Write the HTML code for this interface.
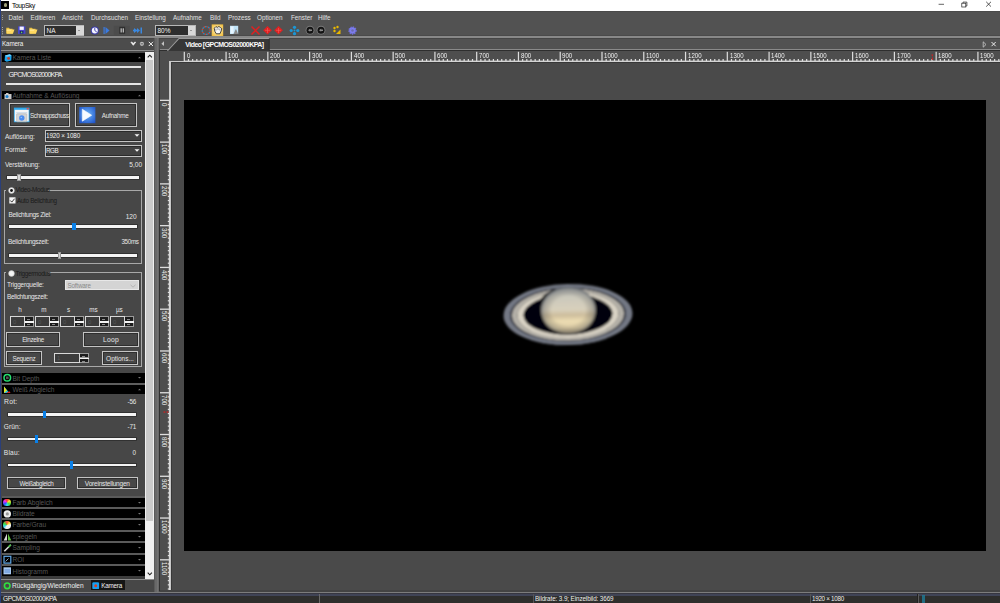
<!DOCTYPE html>
<html><head><meta charset="utf-8"><style>
*{margin:0;padding:0;box-sizing:border-box}
html,body{width:1000px;height:603px;overflow:hidden;background:#4a4a4a;font-family:"Liberation Sans",sans-serif;position:relative}
.a{position:absolute}
.t{position:absolute;white-space:nowrap;font-size:6.3px;line-height:7px;color:#e6e6e6}
.bar{position:absolute;left:2px;width:142.5px;background:#000}
.bt{position:absolute;white-space:nowrap;font-size:6.6px;line-height:7px;color:#565656;left:12.4px;top:1.5px}
.btn{position:absolute;border:1px solid #c4c4c4;background:#474747;box-shadow:inset 0 0 0 1px #2e2e2e}
.cmb{position:absolute;border:1px solid #c4c4c4;background:#434343;box-shadow:inset 0 0 0 1px #2a2a2a}
.trk{position:absolute;height:2.5px;background:#f4f4f4;box-shadow:0 -1px 0 #2a2a2a,0 1px 0 #303030}
.thb{position:absolute;width:3.5px;height:7px;background:#0a80e8}
.thg{position:absolute;width:3.5px;height:7px;background:#d0d0d0}
.grp{position:absolute;border:1px solid #a8a8a8}
.spin{position:absolute;width:23.5px;height:11px}
.spin .f{position:absolute;left:0;top:0;width:15px;height:11px;border:1px solid #d8d8d8;background:#3c3c3c}
.spin .u{position:absolute;left:14.5px;top:0;width:9px;height:5.5px;border:1px solid #9a9a9a;border-left:none;background:#1c1c1c}
.spin .d{position:absolute;left:14.5px;top:5.5px;width:9px;height:5.5px;border:1px solid #9a9a9a;border-left:none;background:#1c1c1c}
.spin .m{position:absolute;left:14.5px;top:4.8px;width:9px;height:1.5px;background:#f4f4f4}
.spin .u:after,.spin .d:after{content:"";position:absolute;left:2.8px;top:1.6px;width:2.6px;height:0.9px;background:#8a8a8a}
</style></head><body>
<div class="a" style="left:0px;top:0px;width:1px;height:603px;background:#2a3f7a"></div>
<div class="a" style="left:1px;top:0px;width:999px;height:10.6px;background:#fff"></div>
<div class="a" style="left:1px;top:1px;width:8px;height:8px;background:#000"></div>
<div class="a" style="left:3.5px;top:3px;width:3.5px;height:3.5px;border-radius:50%;background:#a0a078"></div>
<div class="t" style="left:12px;top:2px;color:#000;font-size:6.6px;letter-spacing:-0.35px">ToupSky</div>
<svg class="a" style="left:930px;top:0" width="70" height="10" viewBox="930 0 70 10">
<path d="M938.6 4.3h5.4" stroke="#222" stroke-width="0.7"/>
<rect x="961.8" y="3.2" width="4" height="3.8" fill="none" stroke="#222" stroke-width="0.7"/>
<path d="M963 3.2v-1.1h3.9v3.9h-1.1" fill="none" stroke="#222" stroke-width="0.7"/>
<path d="M986.2 1.8l4.8 4.8M991 1.8l-4.8 4.8" stroke="#222" stroke-width="0.75"/>
</svg>
<div class="a" style="left:1px;top:10.6px;width:999px;height:24.1px;background:#525252"></div>
<div class="a" style="left:1px;top:10.6px;width:999px;height:1px;background:#4a4a4a"></div>
<div class="a" style="left:1px;top:34.9px;width:999px;height:1.2px;background:#4a4a4a"></div>
<div class="a" style="left:2px;top:15px;width:1.2px;height:1.2px;background:#999;box-shadow:0 2px 0 #999,0 4px 0 #999"></div>
<div class="t" style="left:8.5px;top:13.5px;font-size:6.3px;color:#e0e0e0">Datei</div>
<div class="t" style="left:30.5px;top:13.5px;font-size:6.3px;color:#e0e0e0">Editieren</div>
<div class="t" style="left:62px;top:13.5px;font-size:6.3px;color:#e0e0e0">Ansicht</div>
<div class="t" style="left:91px;top:13.5px;font-size:6.3px;color:#e0e0e0">Durchsuchen</div>
<div class="t" style="left:135px;top:13.5px;font-size:6.3px;color:#e0e0e0">Einstellung</div>
<div class="t" style="left:173px;top:13.5px;font-size:6.3px;color:#e0e0e0">Aufnahme</div>
<div class="t" style="left:210px;top:13.5px;font-size:6.3px;color:#e0e0e0">Bild</div>
<div class="t" style="left:228px;top:13.5px;font-size:6.3px;color:#e0e0e0">Prozess</div>
<div class="t" style="left:257px;top:13.5px;font-size:6.3px;color:#e0e0e0">Optionen</div>
<div class="t" style="left:291px;top:13.5px;font-size:6.3px;color:#e0e0e0">Fenster</div>
<div class="t" style="left:318px;top:13.5px;font-size:6.3px;color:#e0e0e0">Hilfe</div>
<div class="a" style="left:2px;top:26.8px;width:1.3px;height:1.2px;background:#aaa;box-shadow:0 2.1px 0 #aaa,0 4.2px 0 #aaa,0 6.3px 0 #aaa"></div>

<svg class="a" style="left:0;top:23px" width="380" height="14" viewBox="0 23 380 14">
 <!-- folder 1 -->
 <path d="M6.3 27.8h2.6l0.9 0.9h2.8v4.9h-6.3z" fill="#e8c040"/><path d="M6.6 29.6h7.9l-1.6 4.2h-6.3z" fill="#ffd860"/><path d="M6.6 29.6h5l-0.8 1.2h-4.2z" fill="#fff0b0" opacity="0.7"/>
 <!-- save -->
 <rect x="18" y="26.3" width="7.4" height="7.6" fill="#4848c8"/><rect x="19.6" y="26.6" width="4.2" height="3.3" fill="#f4f4ff"/><rect x="19.8" y="31" width="3.6" height="2.6" fill="#20206a"/><circle cx="21.6" cy="32.4" r="0.8" fill="#60d060"/>
 <!-- folder 2 -->
 <path d="M29.3 27.8h2.6l0.9 0.9h2.8v4.9h-6.3z" fill="#e8c040"/><path d="M29.6 29.6h7.9l-1.6 4.2h-6.3z" fill="#ffd860"/><path d="M29.6 29.6h5l-0.8 1.2h-4.2z" fill="#fff0b0" opacity="0.7"/>
 <!-- clock -->
 <circle cx="94.8" cy="30.5" r="4" fill="#3a3aa8"/><circle cx="94.8" cy="30.5" r="3" fill="#f4f4ff"/><path d="M94.8 28v2.5l2 1.5" stroke="#3a3aa8" stroke-width="0.9" fill="none"/>
 <!-- play -->
 <rect x="103.5" y="27" width="1.2" height="7" fill="#3a7ae0"/><path d="M105.5 27l4 3.5-4 3.5z" fill="#3a7ae0"/>
 <!-- pause disabled -->
 <rect x="113.8" y="25.8" width="16" height="9" fill="#4c4c4c"/><rect x="119.3" y="26.8" width="5.8" height="7" fill="#2e2e2e"/><rect x="120.6" y="28.3" width="1.1" height="4.2" fill="#d8d8d8"/><rect x="122.7" y="28.3" width="1.1" height="4.2" fill="#d8d8d8"/>
 <!-- forward -->
 <path d="M134 28l3 2.5-3 2.5z M137 28l3 2.5-3 2.5z" fill="#3a88e0"/><rect x="140.5" y="27.5" width="1.5" height="6" fill="#3a88e0"/><rect x="133" y="29.7" width="4" height="1.6" fill="#3a88e0"/>
 <!-- dashed circle -->
 <circle cx="206.2" cy="30.5" r="3.9" fill="none" stroke="#d04030" stroke-width="1.4" stroke-dasharray="1.5 1.56"/>
 <circle cx="206.2" cy="30.5" r="3.9" fill="none" stroke="#2a90c0" stroke-width="1.4" stroke-dasharray="1.5 1.56" stroke-dashoffset="1.53"/>
 <!-- hand box -->
 <defs><radialGradient id="hb" cx="0.5" cy="0.5" r="0.7"><stop offset="0" stop-color="#fff4c8"/><stop offset="1" stop-color="#f0b830"/></radialGradient></defs>
 <rect x="211.7" y="24.4" width="11.5" height="11.6" fill="url(#hb)"/>
 <path d="M214.3 28.2l1.6-1.6 1.4 0.8 1.6-0.9 1.5 1 1.4 1.2-0.6 2.2-1.3 2.9h-3.6l-1.5-2.6z" fill="#fafafa" stroke="#1a1a1a" stroke-width="0.8" stroke-linejoin="round"/>
 <path d="M216 28.5v2M218 28v2M219.8 28.6v1.8" stroke="#333" stroke-width="0.5"/>
 <!-- image icon -->
 <rect x="230" y="25.8" width="8.2" height="8.2" fill="#c0e4f8"/><rect x="230.6" y="26.4" width="3" height="7" fill="#e8f6ff"/><path d="M233.5 34l1.6-3.5 0.8-1.6 0.8 1.6 1.5 3.5z" fill="#8a8a8a"/>
 <!-- red X -->
 <path d="M251.5 26.5l8 8M259.5 26.5l-8 8" stroke="#e02020" stroke-width="1.5"/>
 <!-- red diamonds -->
 <path d="M267.5 26l4.3 4.3-4.3 4.3-4.3-4.3z" fill="#e02020"/><path d="M267.5 28v5M265 30.3h5" stroke="#f06060" stroke-width="0.6"/>
 <path d="M278.5 26l4.3 4.3-4.3 4.3-4.3-4.3z" fill="#e02020"/><path d="M278.5 28v5M276 30.3h5" stroke="#f06060" stroke-width="0.6"/>
 <!-- blue dots -->
 <circle cx="294.5" cy="27.3" r="1.6" fill="#1a98d8"/><circle cx="294.5" cy="33.7" r="1.6" fill="#1a98d8"/><circle cx="291.2" cy="30.5" r="1.6" fill="#1a98d8"/><circle cx="297.8" cy="30.5" r="1.6" fill="#1a98d8"/><circle cx="294.5" cy="30.5" r="1" fill="#1a98d8"/>
 <!-- black circles -->
 <circle cx="310" cy="30.2" r="4.4" fill="#7a7a7a"/><circle cx="310" cy="30.2" r="3.5" fill="#141414"/><path d="M308 30.2l2.2-1.6v3.2z M310 29.5h2v1.4h-2z" fill="#8a8a8a"/>
 <circle cx="321" cy="30.2" r="4.4" fill="#7a7a7a"/><circle cx="321" cy="30.2" r="3.5" fill="#141414"/><path d="M319 30.2l2.2-1.6v3.2z M321 29.5h2v1.4h-2z" fill="#8a8a8a"/>
 <!-- yellow dots -->
 <circle cx="334.5" cy="28" r="1.2" fill="#e8b800"/><circle cx="337.5" cy="27" r="1.2" fill="#e8b800"/><circle cx="334.5" cy="31" r="1.2" fill="#e8b800"/><path d="M336 34l4.5-4.5v4.5z" fill="#e8b800"/>
 <!-- gear -->
 <circle cx="352.5" cy="30.5" r="3.3" fill="#8080f0" stroke="#7070e0" stroke-width="1.8" stroke-dasharray="1.2 1"/><circle cx="352.5" cy="30.5" r="1.3" fill="#6a6ab0"/>
</svg>

<div class="a" style="left:44px;top:25px;width:40px;height:10.5px;border:1px solid #b8b8b8;background:#2e2e2e"></div>
<div class="a" style="left:76px;top:25.5px;width:7.5px;height:9.5px;background:#d8d8d8"></div>
<div class="a" style="left:78.3px;top:29.5px;width:0;height:0;border-left:1.5px solid transparent;border-right:1.5px solid transparent;border-top:1.8px solid #555"></div>
<div class="t" style="left:46.5px;top:26.5px;color:#f0f0f0;font-size:6.5px">NA</div>
<div class="a" style="left:155px;top:25px;width:40.5px;height:10.5px;border:1px solid #b8b8b8;background:#2e2e2e"></div>
<div class="a" style="left:187.5px;top:25.5px;width:7.5px;height:9.5px;background:#d8d8d8"></div>
<div class="a" style="left:189.8px;top:29.5px;width:0;height:0;border-left:1.5px solid transparent;border-right:1.5px solid transparent;border-top:1.8px solid #555"></div>
<div class="t" style="left:157.5px;top:26.5px;color:#f0f0f0;font-size:6.5px">80%</div>
<div class="a" style="left:1px;top:36.1px;width:999px;height:2px;background:#888888"></div>
<div class="a" style="left:1px;top:38.1px;width:999px;height:0.8px;background:#464646"></div>
<div class="a" style="left:1px;top:38.8px;width:154px;height:10.7px;background:#4c4c4c"></div>
<div class="t" style="left:2px;top:39.8px;font-size:6.3px;color:#f2f2f2;letter-spacing:-0.15px">Kamera</div>
<svg class="a" style="left:128px;top:39px" width="28" height="10" viewBox="128 39 28 10">
<path d="M130.9 42.2l2.4 3.1 2.4-3.1-1.2 0-1.2 1.3-1.2-1.3z" fill="#f4f4f4" stroke="#f4f4f4" stroke-width="0.7" stroke-linejoin="round"/>
<circle cx="141.9" cy="43.8" r="2.1" fill="#bdbdbd"/><rect x="140.6" y="43.4" width="2.6" height="0.9" fill="#555"/>
<path d="M148.8 41.8l4.2 4.2M153 41.8l-4.2 4.2" stroke="#f0f0f0" stroke-width="1"/>
</svg>
<div class="a" style="left:1px;top:49.5px;width:154px;height:1.5px;background:#8c8c8c"></div>
<div class="a" style="left:1px;top:51px;width:144px;height:528px;background:#474747"></div>
<div class="a" style="left:145px;top:52px;width:9.1px;height:526.5px;background:#f0f0f0"></div>
<div class="a" style="left:146.2px;top:60px;width:6.4px;height:461px;background:#cacaca"></div>
<svg class="a" style="left:145px;top:52px" width="10" height="8" viewBox="0 0 10 8"><path d="M2.7 5.3l2.1-2.1 2.1 2.1" stroke="#222" stroke-width="1.1" fill="none"/></svg>
<svg class="a" style="left:145px;top:570px" width="10" height="8" viewBox="0 0 10 8"><path d="M2.7 2.7l2.1 2.1 2.1-2.1" stroke="#222" stroke-width="1.1" fill="none"/></svg>
<div class="a" style="left:2px;top:53px;width:142.5px;height:8.5px;background:#000"></div>
<div class="bt" style="top:54.2px">Kamera Liste</div>
<svg class="a" style="left:3.5px;top:53px" width="9" height="10" viewBox="0 0 9 10"><path d="M1 2.6L5.8 1.2 7.6 2.4 7.3 7.4 2.6 8.8 0.6 7.6z" fill="#1ca6ee"/><path d="M1 2.6L5.8 1.2 7.6 2.4 2.8 3.8z" fill="#70d0ff"/><circle cx="4.6" cy="5.4" r="1.4" fill="#d03a20"/></svg>
<svg class="a" style="left:137px;top:55px" width="5" height="5" viewBox="0 0 5 5"><path d="M1 3.2l1.5-1.5 1.5 1.5z" fill="#777"/></svg>
<div class="a" style="left:6px;top:66px;width:135px;height:2px;background:#e4e4e4"></div>
<div class="t" style="left:8.6px;top:71.2px;font-size:7px;letter-spacing:-0.78px;color:#f2f2f2">GPCMOS02000KPA</div>
<div class="a" style="left:6px;top:82.8px;width:135px;height:2px;background:#e4e4e4"></div>
<div class="a" style="left:2px;top:91.2px;width:142.5px;height:8.3px;background:#000"></div>
<div class="bt" style="top:92.4px">Aufnahme &amp; Auflösung</div>
<svg class="a" style="left:3.5px;top:91.2px" width="9" height="9" viewBox="0 0 9 9"><rect x="0.5" y="3" width="7" height="5" fill="#c8c8c8"/><rect x="2" y="2" width="2.5" height="1.5" fill="#c8c8c8"/><circle cx="3" cy="5.5" r="1.5" fill="#1a80d0"/></svg>
<svg class="a" style="left:137px;top:93.2px" width="5" height="5" viewBox="0 0 5 5"><path d="M1 3.2l1.5-1.5 1.5 1.5z" fill="#777"/></svg>
<div class="a" style="left:9px;top:103px;width:61px;height:24px;border:1px solid #c4c4c4;background:#474747;box-shadow:inset 0 0 0 1px #2e2e2e"></div>
<svg class="a" style="left:12.5px;top:107px" width="17" height="16" viewBox="0 0 17 16">
<rect x="0.9" y="0.6" width="15.6" height="14.6" fill="#30a8ec"/><rect x="1.7" y="2.8" width="14" height="11.6" fill="#f6f6f6"/>
<rect x="13.6" y="1" width="2.2" height="1.5" fill="#e05050"/>
<rect x="3.2" y="5.2" width="11" height="1.2" fill="#c8d8e8"/>
<rect x="3.6" y="6.8" width="10.2" height="8" rx="0.8" fill="#d4d4d4" stroke="#a8a8a8" stroke-width="0.5"/>
<circle cx="8.8" cy="11" r="2.7" fill="#4a8cf0"/><circle cx="8.3" cy="10.5" r="0.8" fill="#90c0ff"/>
</svg>
<div class="t" style="left:30px;top:111.6px;font-size:6.3px;letter-spacing:-0.45px">Schnappschuss</div>
<div class="a" style="left:74.5px;top:103px;width:62px;height:24px;border:1px solid #c4c4c4;background:#474747;box-shadow:inset 0 0 0 1px #2e2e2e"></div>
<svg class="a" style="left:78.5px;top:107px" width="17" height="17" viewBox="0 0 17 17">
<defs><radialGradient id="pg" cx="0.5" cy="0.45" r="0.7"><stop offset="0" stop-color="#70b8f8"/><stop offset="1" stop-color="#1c50c8"/></radialGradient></defs>
<rect x="0.2" y="0" width="16.2" height="16.2" fill="url(#pg)"/><path d="M3.3 2.2l9.4 6-9.4 6z" fill="#f8fbff" stroke="#f8fbff" stroke-width="0.6" stroke-linejoin="round"/>
</svg>
<div class="t" style="left:101.8px;top:111.8px;font-size:6.3px;letter-spacing:-0.25px">Aufnahme</div>
<div class="t" style="left:5px;top:133px;font-size:6.5px;letter-spacing:-0.1px">Auflösung:</div>
<div class="a" style="left:44.8px;top:130px;width:96.8px;height:11.5px;border:1px solid #c4c4c4;background:#434343;box-shadow:inset 0 0 0 1px #2a2a2a"></div>
<div class="t" style="left:46.0px;top:132px;font-size:6.3px;color:#f0f0f0;letter-spacing:-0.1px">1920 × 1080</div>
<svg class="a" style="left:133.6px;top:134.3px" width="6" height="3" viewBox="0 0 6 3"><path d="M0.5 0.2h5l-2.5 2.6z" fill="#f4f4f4"/></svg>
<div class="t" style="left:5px;top:146.2px;font-size:6.5px;letter-spacing:0px">Format:</div>
<div class="a" style="left:44.8px;top:145px;width:96.8px;height:12px;border:1px solid #c4c4c4;background:#434343;box-shadow:inset 0 0 0 1px #2a2a2a"></div>
<div class="t" style="left:46.0px;top:147px;font-size:6.3px;color:#f0f0f0;letter-spacing:-0.45px">RGB</div>
<svg class="a" style="left:133.6px;top:149.3px" width="6" height="3" viewBox="0 0 6 3"><path d="M0.5 0.2h5l-2.5 2.6z" fill="#f4f4f4"/></svg>
<div class="t" style="left:5px;top:160.6px;font-size:6.5px;letter-spacing:-0.15px">Verstärkung:</div>
<div class="t" style="right:857.8px;top:160.6px;font-size:6.6px;letter-spacing:0px">5,00</div>
<div class="a" style="left:7px;top:176.3px;width:131.7px;height:2.5px;background:#f4f4f4;box-shadow:0 0 0 0.8px #2c2c2c"></div>
<div class="a" style="left:17.4px;top:173.8px;width:3.6px;height:7px;background:#d8d8d8;border:0.5px solid #999"></div>
<div class="a" style="left:4px;top:189.5px;width:137.6px;height:74px;border:1px solid #a8a8a8"></div>
<div class="a" style="left:6px;top:185px;width:42px;height:8px;background:#474747"></div>
<svg class="a" style="left:7.5px;top:186.8px" width="7" height="7" viewBox="0 0 7 7"><circle cx="3.5" cy="3.5" r="2.9" fill="#f4f4f4" stroke="#bbb" stroke-width="0.5"/><circle cx="3.5" cy="3.5" r="1.4" fill="#111"/></svg>
<div class="t" style="left:15.4px;top:186.3px;font-size:6.3px;color:#1a1a1a;letter-spacing:-0.25px">Video-Modus</div>
<svg class="a" style="left:9px;top:197px" width="7" height="7" viewBox="0 0 7 7"><rect x="0.3" y="0.3" width="6.2" height="6.2" fill="#f4f4f4"/><path d="M1.3 3.5l1.5 1.6 2.8-3.4" stroke="#222" stroke-width="0.9" fill="none"/></svg>
<div class="t" style="left:17px;top:196.8px;font-size:6.3px;color:#1a1a1a;letter-spacing:-0.3px">Auto Belichtung</div>
<div class="t" style="left:8.5px;top:211px;font-size:6.5px;letter-spacing:-0.3px">Belichtungs Ziel:</div>
<div class="t" style="right:863.3px;top:213px;font-size:6.6px;letter-spacing:0px">120</div>
<div class="a" style="left:8.5px;top:225.3px;width:128.7px;height:2.5px;background:#f4f4f4;box-shadow:0 0 0 0.8px #2c2c2c"></div>
<div class="a" style="left:72px;top:222.8px;width:3.5px;height:7px;background:#0a80e8"></div>
<div class="t" style="left:8px;top:237.5px;font-size:6.5px;letter-spacing:-0.3px">Belichtungszeit:</div>
<div class="t" style="right:861.4px;top:237.5px;font-size:6.3px;letter-spacing:-0.35px">350ms</div>
<div class="a" style="left:8.5px;top:254.4px;width:128.7px;height:2.6px;background:#f4f4f4;box-shadow:0 0 0 0.8px #2c2c2c"></div>
<div class="a" style="left:57.7px;top:252px;width:3.5px;height:7px;background:#d0d0d0;border:0.5px solid #999"></div>
<div class="a" style="left:4px;top:272.3px;width:137.6px;height:95.1px;border:1px solid #a8a8a8"></div>
<div class="a" style="left:6px;top:268px;width:42px;height:8px;background:#474747"></div>
<svg class="a" style="left:7.5px;top:270px" width="7" height="7" viewBox="0 0 7 7"><circle cx="3.5" cy="3.5" r="2.9" fill="#f4f4f4" stroke="#bbb" stroke-width="0.5"/></svg>
<div class="t" style="left:15.4px;top:269.5px;font-size:6.3px;color:#1a1a1a;letter-spacing:-0.3px">Triggermodus</div>
<div class="t" style="left:7px;top:281px;font-size:6.5px;letter-spacing:-0.2px">Triggerquelle:</div>
<div class="a" style="left:65.2px;top:279.8px;width:73.4px;height:10.4px;background:#d4d4d4;border:1px solid #e8e8e8"></div>
<div class="t" style="left:67.5px;top:281.8px;font-size:6.3px;color:#8a8a8a;letter-spacing:-0.2px">Software</div>
<svg class="a" style="left:129.5px;top:283.5px" width="6" height="4" viewBox="0 0 6 4"><path d="M0.5 0.8l2.5 2.4 2.5-2.4" stroke="#a8a8a8" stroke-width="0.7" fill="none"/></svg>
<div class="t" style="left:7px;top:293.4px;font-size:6.5px;letter-spacing:-0.3px">Belichtungszeit:</div>
<div class="t" style="left:10px;width:20px;text-align:center;top:305.5px;font-size:6.3px">h</div>
<div class="t" style="left:33.8px;width:20px;text-align:center;top:305.5px;font-size:6.3px">m</div>
<div class="t" style="left:58.7px;width:20px;text-align:center;top:305.5px;font-size:6.3px">s</div>
<div class="t" style="left:83.4px;width:20px;text-align:center;top:305.5px;font-size:6.3px">ms</div>
<div class="t" style="left:109.3px;width:20px;text-align:center;top:305.5px;font-size:6.3px">µs</div>
<div class="spin" style="left:10px;top:316.4px"><div class="f"></div><div class="u"></div><div class="d"></div><div class="m"></div></div>
<div class="t" style="left:13px;top:318.5px;font-size:6px;color:#585858">0</div>
<div class="spin" style="left:35px;top:316.4px"><div class="f"></div><div class="u"></div><div class="d"></div><div class="m"></div></div>
<div class="t" style="left:38px;top:318.5px;font-size:6px;color:#585858">0</div>
<div class="spin" style="left:60px;top:316.4px"><div class="f"></div><div class="u"></div><div class="d"></div><div class="m"></div></div>
<div class="t" style="left:63px;top:318.5px;font-size:6px;color:#585858">0</div>
<div class="spin" style="left:85px;top:316.4px"><div class="f"></div><div class="u"></div><div class="d"></div><div class="m"></div></div>
<div class="t" style="left:88px;top:318.5px;font-size:6px;color:#585858">0</div>
<div class="spin" style="left:110px;top:316.4px"><div class="f"></div><div class="u"></div><div class="d"></div><div class="m"></div></div>
<div class="t" style="left:113px;top:318.5px;font-size:6px;color:#585858">0</div>
<div class="a" style="left:6px;top:332.3px;width:54.2px;height:14.4px;border:1px solid #c4c4c4;background:#474747;box-shadow:inset 0 0 0 1px #2e2e2e"></div>
<div class="t" style="left:6px;width:54.2px;text-align:center;top:336px;font-size:6.3px;letter-spacing:-0.3px">Einzelne</div>
<div class="a" style="left:83.4px;top:332.3px;width:55.3px;height:14.4px;border:1px solid #c4c4c4;background:#474747;box-shadow:inset 0 0 0 1px #2e2e2e"></div>
<div class="t" style="left:83.4px;width:55.3px;text-align:center;top:336px;font-size:6.8px;letter-spacing:0.3px">Loop</div>
<div class="a" style="left:6px;top:350.5px;width:35.8px;height:14.9px;border:1px solid #c4c4c4;background:#474747;box-shadow:inset 0 0 0 1px #2e2e2e"></div>
<div class="t" style="left:6px;width:35.8px;text-align:center;top:354.5px;font-size:6.3px;letter-spacing:-0.3px">Sequenz</div>
<div class="spin" style="left:53.7px;top:353px;width:35.7px;height:10.4px"><div class="f" style="width:26px;height:10.4px"></div><div class="u" style="left:26px;height:5.2px"></div><div class="d" style="left:26px;top:5.2px;height:5.2px"></div><div class="m" style="left:26px;top:4.7px"></div></div>
<div class="t" style="left:57px;top:354.8px;font-size:6px;color:#585858">1</div>
<div class="a" style="left:101.8px;top:350.5px;width:36.4px;height:14.9px;border:1px solid #c4c4c4;background:#474747;box-shadow:inset 0 0 0 1px #2e2e2e"></div>
<div class="t" style="left:101.8px;width:36.4px;text-align:center;top:354.5px;font-size:6.5px;letter-spacing:0px">Options...</div>
<div class="a" style="left:2px;top:373.4px;width:142.5px;height:9.4px;background:#000"></div>
<div class="bt" style="top:374.59999999999997px">Bit Depth</div>
<svg class="a" style="left:3px;top:373.4px" width="9" height="10" viewBox="0 0 9 10"><circle cx="4.3" cy="4.8" r="3.3" fill="none" stroke="#28e070" stroke-width="1.5"/><rect x="3" y="3.5" width="2.6" height="2.6" fill="#555"/></svg>
<svg class="a" style="left:137px;top:375.4px" width="5" height="5" viewBox="0 0 5 5"><path d="M1 2l1.5 1.5 1.5-1.5z" fill="#777"/></svg>
<div class="a" style="left:2px;top:382.8px;width:142.5px;height:2px;background:#5e5e5e"></div>
<div class="a" style="left:2px;top:384.8px;width:142.5px;height:9px;background:#000"></div>
<div class="bt" style="top:386.0px">Weiß Abgleich</div>
<svg class="a" style="left:3px;top:384.8px" width="9" height="10" viewBox="0 0 9 10"><path d="M1 1.5l5.5 6.5h-5.5z" fill="#20c0e0"/><path d="M1 1.5l3 4-3 2.5z" fill="#e8e020"/><path d="M3 8h4.5l-1-1.8z" fill="#e02020"/></svg>
<svg class="a" style="left:137px;top:386.8px" width="5" height="5" viewBox="0 0 5 5"><path d="M1 3.2l1.5-1.5 1.5 1.5z" fill="#777"/></svg>
<div class="t" style="left:4px;top:397.8px;font-size:6.8px;letter-spacing:0.25px">Rot:</div>
<div class="t" style="right:864px;top:398px;font-size:6.3px;letter-spacing:-0.2px">-56</div>
<div class="a" style="left:7.5px;top:413.2px;width:128.5px;height:2.5px;background:#f4f4f4;box-shadow:0 0 0 0.8px #2c2c2c"></div>
<div class="a" style="left:42.8px;top:410.8px;width:3.3px;height:7.4px;background:#0a80e8"></div>
<div class="t" style="left:3.8px;top:423px;font-size:6.6px;letter-spacing:0.1px">Grün:</div>
<div class="t" style="right:864px;top:423px;font-size:6.3px;letter-spacing:-0.2px">-71</div>
<div class="a" style="left:7.5px;top:437.6px;width:128.5px;height:2.4px;background:#f4f4f4;box-shadow:0 0 0 0.8px #2c2c2c"></div>
<div class="a" style="left:35.2px;top:435.2px;width:3.3px;height:7.4px;background:#0a80e8"></div>
<div class="t" style="left:3.8px;top:448.8px;font-size:6.6px;letter-spacing:0.2px">Blau:</div>
<div class="t" style="right:864px;top:448.8px;font-size:6.3px">0</div>
<div class="a" style="left:7.5px;top:463.6px;width:128.5px;height:2.4px;background:#f4f4f4;box-shadow:0 0 0 0.8px #2c2c2c"></div>
<div class="a" style="left:70px;top:461.2px;width:3.3px;height:7.4px;background:#0a80e8"></div>
<div class="a" style="left:6.6px;top:477px;width:59.7px;height:11.7px;border:1px solid #c4c4c4;background:#474747;box-shadow:inset 0 0 0 1px #2e2e2e"></div>
<div class="t" style="left:6.6px;width:59.7px;text-align:center;top:479.5px;font-size:6.3px;letter-spacing:-0.35px">Weißabgleich</div>
<div class="a" style="left:77px;top:477px;width:60.6px;height:11.7px;border:1px solid #c4c4c4;background:#474747;box-shadow:inset 0 0 0 1px #2e2e2e"></div>
<div class="t" style="left:77px;width:60.6px;text-align:center;top:479.5px;font-size:6.5px;letter-spacing:-0.2px">Voreinstellungen</div>
<div class="a" style="left:2px;top:496.2px;width:142.5px;height:81px;background:#5a5a5a"></div>
<div class="a" style="left:2px;top:497.5px;width:142.5px;height:9.7px;background:#000"></div>
<div class="bt" style="top:498.7px">Farb Abgleich</div>
<div class="a" style="left:3.3px;top:497.5px;margin-top:1.1px;width:7.6px;height:7.6px;border-radius:50%;background:conic-gradient(#ff3030,#ffe030,#40e040,#30e0f0,#3050ff,#f030f0,#ff3030)"></div>
<svg class="a" style="left:137px;top:499.5px" width="5" height="5" viewBox="0 0 5 5"><path d="M1 2l1.5 1.5 1.5-1.5z" fill="#777"/></svg>
<div class="a" style="left:2px;top:508.7px;width:142.5px;height:9.7px;background:#000"></div>
<div class="bt" style="top:509.9px">Bildrate</div>
<svg class="a" style="left:3px;top:508.7px" width="9" height="10" viewBox="0 0 9 10"><circle cx="4.3" cy="4.9" r="3.7" fill="#ececec"/><circle cx="4.3" cy="4.9" r="1.6" fill="#9a9a9a"/></svg>
<svg class="a" style="left:137px;top:510.7px" width="5" height="5" viewBox="0 0 5 5"><path d="M1 2l1.5 1.5 1.5-1.5z" fill="#777"/></svg>
<div class="a" style="left:2px;top:520.1px;width:142.5px;height:9.7px;background:#000"></div>
<div class="bt" style="top:521.3000000000001px">Farbe/Grau</div>
<div class="a" style="left:3.3px;top:520.1px;margin-top:1.1px;width:7.6px;height:7.6px;border-radius:50%;background:conic-gradient(#ff4040 0deg,#ffe030 50deg,#f0f0f0 90deg,#f0f0f0 200deg,#40d0f0 240deg,#40e040 300deg,#ff4040 360deg)"></div>
<svg class="a" style="left:137px;top:522.1px" width="5" height="5" viewBox="0 0 5 5"><path d="M1 2l1.5 1.5 1.5-1.5z" fill="#777"/></svg>
<div class="a" style="left:2px;top:531.6px;width:142.5px;height:9.7px;background:#000"></div>
<div class="bt" style="top:532.8000000000001px">spiegeln</div>
<svg class="a" style="left:3px;top:531.6px" width="9" height="10" viewBox="0 0 9 10"><path d="M4 1.5v7h-3.3z" fill="#d8d8d8"/><path d="M5 1.5v7h3.3z" fill="#60c040"/></svg>
<svg class="a" style="left:137px;top:533.6px" width="5" height="5" viewBox="0 0 5 5"><path d="M1 2l1.5 1.5 1.5-1.5z" fill="#777"/></svg>
<div class="a" style="left:2px;top:543.2px;width:142.5px;height:9.7px;background:#000"></div>
<div class="bt" style="top:544.4000000000001px">Sampling</div>
<svg class="a" style="left:3px;top:543.2px" width="9" height="10" viewBox="0 0 9 10"><path d="M1.3 8.3l6.5-6.5" stroke="#d8d8d8" stroke-width="1.6"/><path d="M5.5 4l2.3-2.3" stroke="#40c040" stroke-width="1.6"/></svg>
<svg class="a" style="left:137px;top:545.2px" width="5" height="5" viewBox="0 0 5 5"><path d="M1 2l1.5 1.5 1.5-1.5z" fill="#777"/></svg>
<div class="a" style="left:2px;top:554.8px;width:142.5px;height:9.7px;background:#000"></div>
<div class="bt" style="top:556.0px">ROI</div>
<svg class="a" style="left:3px;top:554.8px" width="9" height="10" viewBox="0 0 9 10"><rect x="1" y="1.3" width="6.8" height="6.8" fill="none" stroke="#60a8e8" stroke-width="1.2"/><path d="M2.5 6.5l3-3" stroke="#a0c8f0" stroke-width="0.8"/></svg>
<svg class="a" style="left:137px;top:556.8px" width="5" height="5" viewBox="0 0 5 5"><path d="M1 2l1.5 1.5 1.5-1.5z" fill="#777"/></svg>
<div class="a" style="left:2px;top:566.4px;width:142.5px;height:9.7px;background:#000"></div>
<div class="bt" style="top:567.6px">Histogramm</div>
<svg class="a" style="left:3px;top:566.4px" width="9" height="10" viewBox="0 0 9 10"><rect x="0.5" y="1.3" width="7.5" height="7" fill="#a8c8f0"/><rect x="1.5" y="3" width="5.5" height="4" fill="#80a8e0"/></svg>
<svg class="a" style="left:137px;top:568.4px" width="5" height="5" viewBox="0 0 5 5"><path d="M1 2l1.5 1.5 1.5-1.5z" fill="#777"/></svg>
<div class="a" style="left:1px;top:576px;width:144px;height:3px;background:#3c3c3c"></div>
<div class="a" style="left:1px;top:578.8px;width:154px;height:1px;background:#8a8a8a"></div>
<div class="a" style="left:1px;top:579.8px;width:154px;height:12px;background:#474747"></div>
<svg class="a" style="left:2.5px;top:581.5px" width="9" height="8" viewBox="0 0 9 8"><circle cx="4.2" cy="3.8" r="2.8" fill="none" stroke="#30e040" stroke-width="1.6"/></svg>
<div class="t" style="left:12px;top:582px;font-size:6.6px;letter-spacing:-0.1px;color:#ececec">Rückgängig/Wiederholen</div>
<div class="a" style="left:91.2px;top:580px;width:34px;height:10.4px;background:#151515"></div>
<svg class="a" style="left:92.4px;top:581.8px" width="8" height="8" viewBox="0 0 8 8"><rect x="0.3" y="0.3" width="6.8" height="6.8" rx="1.2" fill="#1aa0f0"/><circle cx="3.7" cy="3.8" r="1.5" fill="#e04020"/></svg>
<div class="t" style="left:101.2px;top:582.2px;font-size:6.3px;letter-spacing:-0.2px;color:#f0f0f0">Kamera</div>
<div class="a" style="left:154.1px;top:38px;width:1px;height:554px;background:#5a5a5a"></div>
<div class="a" style="left:155.1px;top:38px;width:4.2px;height:554px;background:#686868"></div>
<div class="a" style="left:156.5px;top:38px;width:1.2px;height:554px;background:#727272"></div>
<div class="a" style="left:159.3px;top:50px;width:0.9px;height:541px;background:#303030"></div>
<div class="a" style="left:159.5px;top:38.8px;width:840.5px;height:11.2px;background:#525252"></div>
<svg class="a" style="left:160px;top:40px" width="6" height="7" viewBox="0 0 6 7"><path d="M4 1.3l-2.6 2.4 2.6 2.4z" fill="#c4c4c4"/></svg>
<div class="a" style="left:159.5px;top:49px;width:840.5px;height:1.2px;background:#8a8a8a"></div>
<div class="a" style="left:159.5px;top:50.2px;width:840.5px;height:1px;background:#2e2e2e"></div>
<svg class="a" style="left:160px;top:37px" width="115" height="15" viewBox="160 37 115 15">
<path d="M167.4 51.5L179 38.5H269.2V51.5z" fill="#363636"/>
<path d="M167.4 51L179 38.5H269.2" stroke="#9a9a9a" stroke-width="1.1" fill="none"/>
<path d="M269.2 38.8V50" stroke="#2a2a2a" stroke-width="1"/>
</svg>
<div class="t" style="left:185.3px;top:40.6px;font-size:7px;font-weight:bold;color:#fafafa;letter-spacing:-0.55px">Video [GPCMOS02000KPA]</div>
<svg class="a" style="left:982px;top:40.5px" width="16" height="7" viewBox="0 0 16 7"><path d="M1.2 0.8l2.8 2.7-2.8 2.7z" fill="none" stroke="#ccc" stroke-width="0.8"/><path d="M9.5 1l4.2 4.2M13.7 1l-4.2 4.2" stroke="#eee" stroke-width="1"/></svg>
<div class="a" style="left:160.2px;top:51.2px;width:839.8px;height:540.5px;background:#4a4a4a"></div>
<div class="a" style="left:160.2px;top:51.2px;width:839.8px;height:10px;background:#4e4e4e"></div>
<div class="a" style="left:160.2px;top:51.2px;width:9.5px;height:540px;background:#4e4e4e"></div>
<div class="a" style="left:169.4px;top:61px;width:830.6px;height:1.3px;background:#c8c8c8"></div>
<div class="a" style="left:171px;top:62.3px;width:829px;height:1px;background:#383838"></div>
<div class="a" style="left:169.4px;top:61px;width:1.5px;height:530px;background:#c8c8c8"></div>
<div class="a" style="left:170.9px;top:62.3px;width:1px;height:529px;background:#383838"></div>
<svg class="a" style="left:0;top:0" width="1000" height="603" viewBox="0 0 1000 603"><rect x="184" y="60.6" width="816" height="1.2" fill="#d8d8d8"/><rect x="168.8" y="100" width="1.2" height="491" fill="#d8d8d8"/><rect x="183.70" y="51.8" width="1.2" height="9.5" fill="#dedede"/><rect x="187.88" y="59" width="1.2" height="2" fill="#e0e0e0"/><rect x="192.05" y="59" width="1.2" height="2" fill="#e0e0e0"/><rect x="196.23" y="59" width="1.2" height="2" fill="#e0e0e0"/><rect x="200.41" y="59" width="1.2" height="2" fill="#e0e0e0"/><rect x="204.59" y="59" width="1.2" height="2" fill="#e0e0e0"/><rect x="208.76" y="59" width="1.2" height="2" fill="#e0e0e0"/><rect x="212.94" y="59" width="1.2" height="2" fill="#e0e0e0"/><rect x="217.12" y="59" width="1.2" height="2" fill="#e0e0e0"/><rect x="221.29" y="59" width="1.2" height="2" fill="#e0e0e0"/><rect x="225.47" y="51.8" width="1.2" height="9.5" fill="#dedede"/><rect x="229.65" y="59" width="1.2" height="2" fill="#e0e0e0"/><rect x="233.82" y="59" width="1.2" height="2" fill="#e0e0e0"/><rect x="238.00" y="59" width="1.2" height="2" fill="#e0e0e0"/><rect x="242.18" y="59" width="1.2" height="2" fill="#e0e0e0"/><rect x="246.36" y="59" width="1.2" height="2" fill="#e0e0e0"/><rect x="250.53" y="59" width="1.2" height="2" fill="#e0e0e0"/><rect x="254.71" y="59" width="1.2" height="2" fill="#e0e0e0"/><rect x="258.89" y="59" width="1.2" height="2" fill="#e0e0e0"/><rect x="263.06" y="59" width="1.2" height="2" fill="#e0e0e0"/><rect x="267.24" y="51.8" width="1.2" height="9.5" fill="#dedede"/><rect x="271.42" y="59" width="1.2" height="2" fill="#e0e0e0"/><rect x="275.59" y="59" width="1.2" height="2" fill="#e0e0e0"/><rect x="279.77" y="59" width="1.2" height="2" fill="#e0e0e0"/><rect x="283.95" y="59" width="1.2" height="2" fill="#e0e0e0"/><rect x="288.12" y="59" width="1.2" height="2" fill="#e0e0e0"/><rect x="292.30" y="59" width="1.2" height="2" fill="#e0e0e0"/><rect x="296.48" y="59" width="1.2" height="2" fill="#e0e0e0"/><rect x="300.66" y="59" width="1.2" height="2" fill="#e0e0e0"/><rect x="304.83" y="59" width="1.2" height="2" fill="#e0e0e0"/><rect x="309.01" y="51.8" width="1.2" height="9.5" fill="#dedede"/><rect x="313.19" y="59" width="1.2" height="2" fill="#e0e0e0"/><rect x="317.36" y="59" width="1.2" height="2" fill="#e0e0e0"/><rect x="321.54" y="59" width="1.2" height="2" fill="#e0e0e0"/><rect x="325.72" y="59" width="1.2" height="2" fill="#e0e0e0"/><rect x="329.89" y="59" width="1.2" height="2" fill="#e0e0e0"/><rect x="334.07" y="59" width="1.2" height="2" fill="#e0e0e0"/><rect x="338.25" y="59" width="1.2" height="2" fill="#e0e0e0"/><rect x="342.43" y="59" width="1.2" height="2" fill="#e0e0e0"/><rect x="346.60" y="59" width="1.2" height="2" fill="#e0e0e0"/><rect x="350.78" y="51.8" width="1.2" height="9.5" fill="#dedede"/><rect x="354.96" y="59" width="1.2" height="2" fill="#e0e0e0"/><rect x="359.13" y="59" width="1.2" height="2" fill="#e0e0e0"/><rect x="363.31" y="59" width="1.2" height="2" fill="#e0e0e0"/><rect x="367.49" y="59" width="1.2" height="2" fill="#e0e0e0"/><rect x="371.66" y="59" width="1.2" height="2" fill="#e0e0e0"/><rect x="375.84" y="59" width="1.2" height="2" fill="#e0e0e0"/><rect x="380.02" y="59" width="1.2" height="2" fill="#e0e0e0"/><rect x="384.20" y="59" width="1.2" height="2" fill="#e0e0e0"/><rect x="388.37" y="59" width="1.2" height="2" fill="#e0e0e0"/><rect x="392.55" y="51.8" width="1.2" height="9.5" fill="#dedede"/><rect x="396.73" y="59" width="1.2" height="2" fill="#e0e0e0"/><rect x="400.90" y="59" width="1.2" height="2" fill="#e0e0e0"/><rect x="405.08" y="59" width="1.2" height="2" fill="#e0e0e0"/><rect x="409.26" y="59" width="1.2" height="2" fill="#e0e0e0"/><rect x="413.44" y="59" width="1.2" height="2" fill="#e0e0e0"/><rect x="417.61" y="59" width="1.2" height="2" fill="#e0e0e0"/><rect x="421.79" y="59" width="1.2" height="2" fill="#e0e0e0"/><rect x="425.97" y="59" width="1.2" height="2" fill="#e0e0e0"/><rect x="430.14" y="59" width="1.2" height="2" fill="#e0e0e0"/><rect x="434.32" y="51.8" width="1.2" height="9.5" fill="#dedede"/><rect x="438.50" y="59" width="1.2" height="2" fill="#e0e0e0"/><rect x="442.67" y="59" width="1.2" height="2" fill="#e0e0e0"/><rect x="446.85" y="59" width="1.2" height="2" fill="#e0e0e0"/><rect x="451.03" y="59" width="1.2" height="2" fill="#e0e0e0"/><rect x="455.20" y="59" width="1.2" height="2" fill="#e0e0e0"/><rect x="459.38" y="59" width="1.2" height="2" fill="#e0e0e0"/><rect x="463.56" y="59" width="1.2" height="2" fill="#e0e0e0"/><rect x="467.74" y="59" width="1.2" height="2" fill="#e0e0e0"/><rect x="471.91" y="59" width="1.2" height="2" fill="#e0e0e0"/><rect x="476.09" y="51.8" width="1.2" height="9.5" fill="#dedede"/><rect x="480.27" y="59" width="1.2" height="2" fill="#e0e0e0"/><rect x="484.44" y="59" width="1.2" height="2" fill="#e0e0e0"/><rect x="488.62" y="59" width="1.2" height="2" fill="#e0e0e0"/><rect x="492.80" y="59" width="1.2" height="2" fill="#e0e0e0"/><rect x="496.98" y="59" width="1.2" height="2" fill="#e0e0e0"/><rect x="501.15" y="59" width="1.2" height="2" fill="#e0e0e0"/><rect x="505.33" y="59" width="1.2" height="2" fill="#e0e0e0"/><rect x="509.51" y="59" width="1.2" height="2" fill="#e0e0e0"/><rect x="513.68" y="59" width="1.2" height="2" fill="#e0e0e0"/><rect x="517.86" y="51.8" width="1.2" height="9.5" fill="#dedede"/><rect x="522.04" y="59" width="1.2" height="2" fill="#e0e0e0"/><rect x="526.21" y="59" width="1.2" height="2" fill="#e0e0e0"/><rect x="530.39" y="59" width="1.2" height="2" fill="#e0e0e0"/><rect x="534.57" y="59" width="1.2" height="2" fill="#e0e0e0"/><rect x="538.75" y="59" width="1.2" height="2" fill="#e0e0e0"/><rect x="542.92" y="59" width="1.2" height="2" fill="#e0e0e0"/><rect x="547.10" y="59" width="1.2" height="2" fill="#e0e0e0"/><rect x="551.28" y="59" width="1.2" height="2" fill="#e0e0e0"/><rect x="555.45" y="59" width="1.2" height="2" fill="#e0e0e0"/><rect x="559.63" y="51.8" width="1.2" height="9.5" fill="#dedede"/><rect x="563.81" y="59" width="1.2" height="2" fill="#e0e0e0"/><rect x="567.98" y="59" width="1.2" height="2" fill="#e0e0e0"/><rect x="572.16" y="59" width="1.2" height="2" fill="#e0e0e0"/><rect x="576.34" y="59" width="1.2" height="2" fill="#e0e0e0"/><rect x="580.51" y="59" width="1.2" height="2" fill="#e0e0e0"/><rect x="584.69" y="59" width="1.2" height="2" fill="#e0e0e0"/><rect x="588.87" y="59" width="1.2" height="2" fill="#e0e0e0"/><rect x="593.05" y="59" width="1.2" height="2" fill="#e0e0e0"/><rect x="597.22" y="59" width="1.2" height="2" fill="#e0e0e0"/><rect x="601.40" y="51.8" width="1.2" height="9.5" fill="#dedede"/><rect x="605.58" y="59" width="1.2" height="2" fill="#e0e0e0"/><rect x="609.75" y="59" width="1.2" height="2" fill="#e0e0e0"/><rect x="613.93" y="59" width="1.2" height="2" fill="#e0e0e0"/><rect x="618.11" y="59" width="1.2" height="2" fill="#e0e0e0"/><rect x="622.28" y="59" width="1.2" height="2" fill="#e0e0e0"/><rect x="626.46" y="59" width="1.2" height="2" fill="#e0e0e0"/><rect x="630.64" y="59" width="1.2" height="2" fill="#e0e0e0"/><rect x="634.82" y="59" width="1.2" height="2" fill="#e0e0e0"/><rect x="638.99" y="59" width="1.2" height="2" fill="#e0e0e0"/><rect x="643.17" y="51.8" width="1.2" height="9.5" fill="#dedede"/><rect x="647.35" y="59" width="1.2" height="2" fill="#e0e0e0"/><rect x="651.52" y="59" width="1.2" height="2" fill="#e0e0e0"/><rect x="655.70" y="59" width="1.2" height="2" fill="#e0e0e0"/><rect x="659.88" y="59" width="1.2" height="2" fill="#e0e0e0"/><rect x="664.05" y="59" width="1.2" height="2" fill="#e0e0e0"/><rect x="668.23" y="59" width="1.2" height="2" fill="#e0e0e0"/><rect x="672.41" y="59" width="1.2" height="2" fill="#e0e0e0"/><rect x="676.59" y="59" width="1.2" height="2" fill="#e0e0e0"/><rect x="680.76" y="59" width="1.2" height="2" fill="#e0e0e0"/><rect x="684.94" y="51.8" width="1.2" height="9.5" fill="#dedede"/><rect x="689.12" y="59" width="1.2" height="2" fill="#e0e0e0"/><rect x="693.29" y="59" width="1.2" height="2" fill="#e0e0e0"/><rect x="697.47" y="59" width="1.2" height="2" fill="#e0e0e0"/><rect x="701.65" y="59" width="1.2" height="2" fill="#e0e0e0"/><rect x="705.82" y="59" width="1.2" height="2" fill="#e0e0e0"/><rect x="710.00" y="59" width="1.2" height="2" fill="#e0e0e0"/><rect x="714.18" y="59" width="1.2" height="2" fill="#e0e0e0"/><rect x="718.36" y="59" width="1.2" height="2" fill="#e0e0e0"/><rect x="722.53" y="59" width="1.2" height="2" fill="#e0e0e0"/><rect x="726.71" y="51.8" width="1.2" height="9.5" fill="#dedede"/><rect x="730.89" y="59" width="1.2" height="2" fill="#e0e0e0"/><rect x="735.06" y="59" width="1.2" height="2" fill="#e0e0e0"/><rect x="739.24" y="59" width="1.2" height="2" fill="#e0e0e0"/><rect x="743.42" y="59" width="1.2" height="2" fill="#e0e0e0"/><rect x="747.60" y="59" width="1.2" height="2" fill="#e0e0e0"/><rect x="751.77" y="59" width="1.2" height="2" fill="#e0e0e0"/><rect x="755.95" y="59" width="1.2" height="2" fill="#e0e0e0"/><rect x="760.13" y="59" width="1.2" height="2" fill="#e0e0e0"/><rect x="764.30" y="59" width="1.2" height="2" fill="#e0e0e0"/><rect x="768.48" y="51.8" width="1.2" height="9.5" fill="#dedede"/><rect x="772.66" y="59" width="1.2" height="2" fill="#e0e0e0"/><rect x="776.83" y="59" width="1.2" height="2" fill="#e0e0e0"/><rect x="781.01" y="59" width="1.2" height="2" fill="#e0e0e0"/><rect x="785.19" y="59" width="1.2" height="2" fill="#e0e0e0"/><rect x="789.37" y="59" width="1.2" height="2" fill="#e0e0e0"/><rect x="793.54" y="59" width="1.2" height="2" fill="#e0e0e0"/><rect x="797.72" y="59" width="1.2" height="2" fill="#e0e0e0"/><rect x="801.90" y="59" width="1.2" height="2" fill="#e0e0e0"/><rect x="806.07" y="59" width="1.2" height="2" fill="#e0e0e0"/><rect x="810.25" y="51.8" width="1.2" height="9.5" fill="#dedede"/><rect x="814.43" y="59" width="1.2" height="2" fill="#e0e0e0"/><rect x="818.60" y="59" width="1.2" height="2" fill="#e0e0e0"/><rect x="822.78" y="59" width="1.2" height="2" fill="#e0e0e0"/><rect x="826.96" y="59" width="1.2" height="2" fill="#e0e0e0"/><rect x="831.14" y="59" width="1.2" height="2" fill="#e0e0e0"/><rect x="835.31" y="59" width="1.2" height="2" fill="#e0e0e0"/><rect x="839.49" y="59" width="1.2" height="2" fill="#e0e0e0"/><rect x="843.67" y="59" width="1.2" height="2" fill="#e0e0e0"/><rect x="847.84" y="59" width="1.2" height="2" fill="#e0e0e0"/><rect x="852.02" y="51.8" width="1.2" height="9.5" fill="#dedede"/><rect x="856.20" y="59" width="1.2" height="2" fill="#e0e0e0"/><rect x="860.37" y="59" width="1.2" height="2" fill="#e0e0e0"/><rect x="864.55" y="59" width="1.2" height="2" fill="#e0e0e0"/><rect x="868.73" y="59" width="1.2" height="2" fill="#e0e0e0"/><rect x="872.91" y="59" width="1.2" height="2" fill="#e0e0e0"/><rect x="877.08" y="59" width="1.2" height="2" fill="#e0e0e0"/><rect x="881.26" y="59" width="1.2" height="2" fill="#e0e0e0"/><rect x="885.44" y="59" width="1.2" height="2" fill="#e0e0e0"/><rect x="889.61" y="59" width="1.2" height="2" fill="#e0e0e0"/><rect x="893.79" y="51.8" width="1.2" height="9.5" fill="#dedede"/><rect x="897.97" y="59" width="1.2" height="2" fill="#e0e0e0"/><rect x="902.14" y="59" width="1.2" height="2" fill="#e0e0e0"/><rect x="906.32" y="59" width="1.2" height="2" fill="#e0e0e0"/><rect x="910.50" y="59" width="1.2" height="2" fill="#e0e0e0"/><rect x="914.68" y="59" width="1.2" height="2" fill="#e0e0e0"/><rect x="918.85" y="59" width="1.2" height="2" fill="#e0e0e0"/><rect x="923.03" y="59" width="1.2" height="2" fill="#e0e0e0"/><rect x="927.21" y="59" width="1.2" height="2" fill="#e0e0e0"/><rect x="931.38" y="59" width="1.2" height="2" fill="#e0e0e0"/><rect x="935.56" y="51.8" width="1.2" height="9.5" fill="#dedede"/><rect x="939.74" y="59" width="1.2" height="2" fill="#e0e0e0"/><rect x="943.91" y="59" width="1.2" height="2" fill="#e0e0e0"/><rect x="948.09" y="59" width="1.2" height="2" fill="#e0e0e0"/><rect x="952.27" y="59" width="1.2" height="2" fill="#e0e0e0"/><rect x="956.45" y="59" width="1.2" height="2" fill="#e0e0e0"/><rect x="960.62" y="59" width="1.2" height="2" fill="#e0e0e0"/><rect x="964.80" y="59" width="1.2" height="2" fill="#e0e0e0"/><rect x="968.98" y="59" width="1.2" height="2" fill="#e0e0e0"/><rect x="973.15" y="59" width="1.2" height="2" fill="#e0e0e0"/><rect x="977.33" y="51.8" width="1.2" height="9.5" fill="#dedede"/><rect x="981.51" y="59" width="1.2" height="2" fill="#e0e0e0"/><rect x="985.68" y="59" width="1.2" height="2" fill="#e0e0e0"/><rect x="989.86" y="59" width="1.2" height="2" fill="#e0e0e0"/><rect x="994.04" y="59" width="1.2" height="2" fill="#e0e0e0"/><rect x="998.22" y="59" width="1.2" height="2" fill="#e0e0e0"/><rect x="160" y="99.70" width="9.8" height="1.3" fill="#dedede"/><rect x="167.8" y="103.88" width="2" height="1.2" fill="#e0e0e0"/><rect x="167.8" y="108.05" width="2" height="1.2" fill="#e0e0e0"/><rect x="167.8" y="112.23" width="2" height="1.2" fill="#e0e0e0"/><rect x="167.8" y="116.41" width="2" height="1.2" fill="#e0e0e0"/><rect x="167.8" y="120.59" width="2" height="1.2" fill="#e0e0e0"/><rect x="167.8" y="124.76" width="2" height="1.2" fill="#e0e0e0"/><rect x="167.8" y="128.94" width="2" height="1.2" fill="#e0e0e0"/><rect x="167.8" y="133.12" width="2" height="1.2" fill="#e0e0e0"/><rect x="167.8" y="137.29" width="2" height="1.2" fill="#e0e0e0"/><rect x="160" y="141.47" width="9.8" height="1.3" fill="#dedede"/><rect x="167.8" y="145.65" width="2" height="1.2" fill="#e0e0e0"/><rect x="167.8" y="149.82" width="2" height="1.2" fill="#e0e0e0"/><rect x="167.8" y="154.00" width="2" height="1.2" fill="#e0e0e0"/><rect x="167.8" y="158.18" width="2" height="1.2" fill="#e0e0e0"/><rect x="167.8" y="162.36" width="2" height="1.2" fill="#e0e0e0"/><rect x="167.8" y="166.53" width="2" height="1.2" fill="#e0e0e0"/><rect x="167.8" y="170.71" width="2" height="1.2" fill="#e0e0e0"/><rect x="167.8" y="174.89" width="2" height="1.2" fill="#e0e0e0"/><rect x="167.8" y="179.06" width="2" height="1.2" fill="#e0e0e0"/><rect x="160" y="183.24" width="9.8" height="1.3" fill="#dedede"/><rect x="167.8" y="187.42" width="2" height="1.2" fill="#e0e0e0"/><rect x="167.8" y="191.59" width="2" height="1.2" fill="#e0e0e0"/><rect x="167.8" y="195.77" width="2" height="1.2" fill="#e0e0e0"/><rect x="167.8" y="199.95" width="2" height="1.2" fill="#e0e0e0"/><rect x="167.8" y="204.12" width="2" height="1.2" fill="#e0e0e0"/><rect x="167.8" y="208.30" width="2" height="1.2" fill="#e0e0e0"/><rect x="167.8" y="212.48" width="2" height="1.2" fill="#e0e0e0"/><rect x="167.8" y="216.66" width="2" height="1.2" fill="#e0e0e0"/><rect x="167.8" y="220.83" width="2" height="1.2" fill="#e0e0e0"/><rect x="160" y="225.01" width="9.8" height="1.3" fill="#dedede"/><rect x="167.8" y="229.19" width="2" height="1.2" fill="#e0e0e0"/><rect x="167.8" y="233.36" width="2" height="1.2" fill="#e0e0e0"/><rect x="167.8" y="237.54" width="2" height="1.2" fill="#e0e0e0"/><rect x="167.8" y="241.72" width="2" height="1.2" fill="#e0e0e0"/><rect x="167.8" y="245.90" width="2" height="1.2" fill="#e0e0e0"/><rect x="167.8" y="250.07" width="2" height="1.2" fill="#e0e0e0"/><rect x="167.8" y="254.25" width="2" height="1.2" fill="#e0e0e0"/><rect x="167.8" y="258.43" width="2" height="1.2" fill="#e0e0e0"/><rect x="167.8" y="262.60" width="2" height="1.2" fill="#e0e0e0"/><rect x="160" y="266.78" width="9.8" height="1.3" fill="#dedede"/><rect x="167.8" y="270.96" width="2" height="1.2" fill="#e0e0e0"/><rect x="167.8" y="275.13" width="2" height="1.2" fill="#e0e0e0"/><rect x="167.8" y="279.31" width="2" height="1.2" fill="#e0e0e0"/><rect x="167.8" y="283.49" width="2" height="1.2" fill="#e0e0e0"/><rect x="167.8" y="287.66" width="2" height="1.2" fill="#e0e0e0"/><rect x="167.8" y="291.84" width="2" height="1.2" fill="#e0e0e0"/><rect x="167.8" y="296.02" width="2" height="1.2" fill="#e0e0e0"/><rect x="167.8" y="300.20" width="2" height="1.2" fill="#e0e0e0"/><rect x="167.8" y="304.37" width="2" height="1.2" fill="#e0e0e0"/><rect x="160" y="308.55" width="9.8" height="1.3" fill="#dedede"/><rect x="167.8" y="312.73" width="2" height="1.2" fill="#e0e0e0"/><rect x="167.8" y="316.90" width="2" height="1.2" fill="#e0e0e0"/><rect x="167.8" y="321.08" width="2" height="1.2" fill="#e0e0e0"/><rect x="167.8" y="325.26" width="2" height="1.2" fill="#e0e0e0"/><rect x="167.8" y="329.44" width="2" height="1.2" fill="#e0e0e0"/><rect x="167.8" y="333.61" width="2" height="1.2" fill="#e0e0e0"/><rect x="167.8" y="337.79" width="2" height="1.2" fill="#e0e0e0"/><rect x="167.8" y="341.97" width="2" height="1.2" fill="#e0e0e0"/><rect x="167.8" y="346.14" width="2" height="1.2" fill="#e0e0e0"/><rect x="160" y="350.32" width="9.8" height="1.3" fill="#dedede"/><rect x="167.8" y="354.50" width="2" height="1.2" fill="#e0e0e0"/><rect x="167.8" y="358.67" width="2" height="1.2" fill="#e0e0e0"/><rect x="167.8" y="362.85" width="2" height="1.2" fill="#e0e0e0"/><rect x="167.8" y="367.03" width="2" height="1.2" fill="#e0e0e0"/><rect x="167.8" y="371.20" width="2" height="1.2" fill="#e0e0e0"/><rect x="167.8" y="375.38" width="2" height="1.2" fill="#e0e0e0"/><rect x="167.8" y="379.56" width="2" height="1.2" fill="#e0e0e0"/><rect x="167.8" y="383.74" width="2" height="1.2" fill="#e0e0e0"/><rect x="167.8" y="387.91" width="2" height="1.2" fill="#e0e0e0"/><rect x="160" y="392.09" width="9.8" height="1.3" fill="#dedede"/><rect x="167.8" y="396.27" width="2" height="1.2" fill="#e0e0e0"/><rect x="167.8" y="400.44" width="2" height="1.2" fill="#e0e0e0"/><rect x="167.8" y="404.62" width="2" height="1.2" fill="#e0e0e0"/><rect x="167.8" y="408.80" width="2" height="1.2" fill="#e0e0e0"/><rect x="167.8" y="412.98" width="2" height="1.2" fill="#e0e0e0"/><rect x="167.8" y="417.15" width="2" height="1.2" fill="#e0e0e0"/><rect x="167.8" y="421.33" width="2" height="1.2" fill="#e0e0e0"/><rect x="167.8" y="425.51" width="2" height="1.2" fill="#e0e0e0"/><rect x="167.8" y="429.68" width="2" height="1.2" fill="#e0e0e0"/><rect x="160" y="433.86" width="9.8" height="1.3" fill="#dedede"/><rect x="167.8" y="438.04" width="2" height="1.2" fill="#e0e0e0"/><rect x="167.8" y="442.21" width="2" height="1.2" fill="#e0e0e0"/><rect x="167.8" y="446.39" width="2" height="1.2" fill="#e0e0e0"/><rect x="167.8" y="450.57" width="2" height="1.2" fill="#e0e0e0"/><rect x="167.8" y="454.75" width="2" height="1.2" fill="#e0e0e0"/><rect x="167.8" y="458.92" width="2" height="1.2" fill="#e0e0e0"/><rect x="167.8" y="463.10" width="2" height="1.2" fill="#e0e0e0"/><rect x="167.8" y="467.28" width="2" height="1.2" fill="#e0e0e0"/><rect x="167.8" y="471.45" width="2" height="1.2" fill="#e0e0e0"/><rect x="160" y="475.63" width="9.8" height="1.3" fill="#dedede"/><rect x="167.8" y="479.81" width="2" height="1.2" fill="#e0e0e0"/><rect x="167.8" y="483.98" width="2" height="1.2" fill="#e0e0e0"/><rect x="167.8" y="488.16" width="2" height="1.2" fill="#e0e0e0"/><rect x="167.8" y="492.34" width="2" height="1.2" fill="#e0e0e0"/><rect x="167.8" y="496.51" width="2" height="1.2" fill="#e0e0e0"/><rect x="167.8" y="500.69" width="2" height="1.2" fill="#e0e0e0"/><rect x="167.8" y="504.87" width="2" height="1.2" fill="#e0e0e0"/><rect x="167.8" y="509.05" width="2" height="1.2" fill="#e0e0e0"/><rect x="167.8" y="513.22" width="2" height="1.2" fill="#e0e0e0"/><rect x="160" y="517.40" width="9.8" height="1.3" fill="#dedede"/><rect x="167.8" y="521.58" width="2" height="1.2" fill="#e0e0e0"/><rect x="167.8" y="525.75" width="2" height="1.2" fill="#e0e0e0"/><rect x="167.8" y="529.93" width="2" height="1.2" fill="#e0e0e0"/><rect x="167.8" y="534.11" width="2" height="1.2" fill="#e0e0e0"/><rect x="167.8" y="538.28" width="2" height="1.2" fill="#e0e0e0"/><rect x="167.8" y="542.46" width="2" height="1.2" fill="#e0e0e0"/><rect x="167.8" y="546.64" width="2" height="1.2" fill="#e0e0e0"/><rect x="167.8" y="550.82" width="2" height="1.2" fill="#e0e0e0"/><rect x="167.8" y="554.99" width="2" height="1.2" fill="#e0e0e0"/><rect x="160" y="559.17" width="9.8" height="1.3" fill="#dedede"/><rect x="167.8" y="563.35" width="2" height="1.2" fill="#e0e0e0"/><rect x="167.8" y="567.52" width="2" height="1.2" fill="#e0e0e0"/><rect x="167.8" y="571.70" width="2" height="1.2" fill="#e0e0e0"/><rect x="167.8" y="575.88" width="2" height="1.2" fill="#e0e0e0"/><rect x="167.8" y="580.05" width="2" height="1.2" fill="#e0e0e0"/><rect x="167.8" y="584.23" width="2" height="1.2" fill="#e0e0e0"/><rect x="167.8" y="588.41" width="2" height="1.2" fill="#e0e0e0"/><path d="M931.3 54.5h2l-1 2.2z" fill="#d02020"/><rect x="931.8" y="57.5" width="1.1" height="2.5" fill="#d02020"/><rect x="163.5" y="411.4" width="1.8" height="1.3" fill="#d02020"/><rect x="166.6" y="411.4" width="1.8" height="1.3" fill="#d02020"/></svg>
<div class="t" style="left:186.50px;top:51.6px;font-size:7.6px;line-height:7px;color:#f0f0f0;transform-origin:0 0;transform:scaleX(0.8)">0</div>
<div class="t" style="left:228.27px;top:51.6px;font-size:7.6px;line-height:7px;color:#f0f0f0;transform-origin:0 0;transform:scaleX(0.8)">100</div>
<div class="t" style="left:270.04px;top:51.6px;font-size:7.6px;line-height:7px;color:#f0f0f0;transform-origin:0 0;transform:scaleX(0.8)">200</div>
<div class="t" style="left:311.81px;top:51.6px;font-size:7.6px;line-height:7px;color:#f0f0f0;transform-origin:0 0;transform:scaleX(0.8)">300</div>
<div class="t" style="left:353.58px;top:51.6px;font-size:7.6px;line-height:7px;color:#f0f0f0;transform-origin:0 0;transform:scaleX(0.8)">400</div>
<div class="t" style="left:395.35px;top:51.6px;font-size:7.6px;line-height:7px;color:#f0f0f0;transform-origin:0 0;transform:scaleX(0.8)">500</div>
<div class="t" style="left:437.12px;top:51.6px;font-size:7.6px;line-height:7px;color:#f0f0f0;transform-origin:0 0;transform:scaleX(0.8)">600</div>
<div class="t" style="left:478.89px;top:51.6px;font-size:7.6px;line-height:7px;color:#f0f0f0;transform-origin:0 0;transform:scaleX(0.8)">700</div>
<div class="t" style="left:520.66px;top:51.6px;font-size:7.6px;line-height:7px;color:#f0f0f0;transform-origin:0 0;transform:scaleX(0.8)">800</div>
<div class="t" style="left:562.43px;top:51.6px;font-size:7.6px;line-height:7px;color:#f0f0f0;transform-origin:0 0;transform:scaleX(0.8)">900</div>
<div class="t" style="left:604.20px;top:51.6px;font-size:7.6px;line-height:7px;color:#f0f0f0;transform-origin:0 0;transform:scaleX(0.8)">1000</div>
<div class="t" style="left:645.97px;top:51.6px;font-size:7.6px;line-height:7px;color:#f0f0f0;transform-origin:0 0;transform:scaleX(0.8)">1100</div>
<div class="t" style="left:687.74px;top:51.6px;font-size:7.6px;line-height:7px;color:#f0f0f0;transform-origin:0 0;transform:scaleX(0.8)">1200</div>
<div class="t" style="left:729.51px;top:51.6px;font-size:7.6px;line-height:7px;color:#f0f0f0;transform-origin:0 0;transform:scaleX(0.8)">1300</div>
<div class="t" style="left:771.28px;top:51.6px;font-size:7.6px;line-height:7px;color:#f0f0f0;transform-origin:0 0;transform:scaleX(0.8)">1400</div>
<div class="t" style="left:813.05px;top:51.6px;font-size:7.6px;line-height:7px;color:#f0f0f0;transform-origin:0 0;transform:scaleX(0.8)">1500</div>
<div class="t" style="left:854.82px;top:51.6px;font-size:7.6px;line-height:7px;color:#f0f0f0;transform-origin:0 0;transform:scaleX(0.8)">1600</div>
<div class="t" style="left:896.59px;top:51.6px;font-size:7.6px;line-height:7px;color:#f0f0f0;transform-origin:0 0;transform:scaleX(0.8)">1700</div>
<div class="t" style="left:938.36px;top:51.6px;font-size:7.6px;line-height:7px;color:#f0f0f0;transform-origin:0 0;transform:scaleX(0.8)">1800</div>
<div class="t" style="left:980.13px;top:51.6px;font-size:7.6px;line-height:7px;color:#f0f0f0;transform-origin:0 0;transform:scaleX(0.8)">1900</div>
<div class="t" style="left:167.8px;top:102.60px;font-size:7.6px;line-height:7px;color:#f0f0f0;transform-origin:0 0;transform:rotate(90deg) scaleX(0.8)">0</div>
<div class="t" style="left:167.8px;top:144.37px;font-size:7.6px;line-height:7px;color:#f0f0f0;transform-origin:0 0;transform:rotate(90deg) scaleX(0.8)">100</div>
<div class="t" style="left:167.8px;top:186.14px;font-size:7.6px;line-height:7px;color:#f0f0f0;transform-origin:0 0;transform:rotate(90deg) scaleX(0.8)">200</div>
<div class="t" style="left:167.8px;top:227.91px;font-size:7.6px;line-height:7px;color:#f0f0f0;transform-origin:0 0;transform:rotate(90deg) scaleX(0.8)">300</div>
<div class="t" style="left:167.8px;top:269.68px;font-size:7.6px;line-height:7px;color:#f0f0f0;transform-origin:0 0;transform:rotate(90deg) scaleX(0.8)">400</div>
<div class="t" style="left:167.8px;top:311.45px;font-size:7.6px;line-height:7px;color:#f0f0f0;transform-origin:0 0;transform:rotate(90deg) scaleX(0.8)">500</div>
<div class="t" style="left:167.8px;top:353.22px;font-size:7.6px;line-height:7px;color:#f0f0f0;transform-origin:0 0;transform:rotate(90deg) scaleX(0.8)">600</div>
<div class="t" style="left:167.8px;top:394.99px;font-size:7.6px;line-height:7px;color:#f0f0f0;transform-origin:0 0;transform:rotate(90deg) scaleX(0.8)">700</div>
<div class="t" style="left:167.8px;top:436.76px;font-size:7.6px;line-height:7px;color:#f0f0f0;transform-origin:0 0;transform:rotate(90deg) scaleX(0.8)">800</div>
<div class="t" style="left:167.8px;top:478.53px;font-size:7.6px;line-height:7px;color:#f0f0f0;transform-origin:0 0;transform:rotate(90deg) scaleX(0.8)">900</div>
<div class="t" style="left:167.8px;top:520.30px;font-size:7.6px;line-height:7px;color:#f0f0f0;transform-origin:0 0;transform:rotate(90deg) scaleX(0.8)">1000</div>
<div class="t" style="left:167.8px;top:562.07px;font-size:7.6px;line-height:7px;color:#f0f0f0;transform-origin:0 0;transform:rotate(90deg) scaleX(0.8)">1100</div>
<div class="a" style="left:184.2px;top:100.3px;width:802px;height:451px;background:#000"></div>
<svg class="a" style="left:480px;top:260px" width="180" height="110" viewBox="480 260 180 110">
<defs>
<filter id="bl" x="-20%" y="-40%" width="140%" height="180%"><feGaussianBlur stdDeviation="1.2"/></filter>
<linearGradient id="globe" x1="0" y1="0" x2="0" y2="1"><stop offset="0" stop-color="#a8aaa8"/><stop offset="0.2" stop-color="#cac8bc"/><stop offset="0.48" stop-color="#d8d0bc"/><stop offset="0.6" stop-color="#cdbd9c"/><stop offset="0.72" stop-color="#ecdcb2"/><stop offset="0.86" stop-color="#e2d2aa"/><stop offset="1" stop-color="#a89878"/></linearGradient>
<radialGradient id="gl2" cx="0.5" cy="0.5" r="0.5"><stop offset="0.6" stop-color="#000" stop-opacity="0"/><stop offset="0.9" stop-color="#202838" stop-opacity="0.25"/><stop offset="1" stop-color="#202838" stop-opacity="0.6"/></radialGradient>
<clipPath id="shclip"><rect x="530" y="286" width="26" height="20"/></clipPath>
<clipPath id="front"><rect x="530" y="314.5" width="76" height="60"/></clipPath>
</defs>
<g filter="url(#bl)" transform="rotate(-1.2 568 314.5)">
 <path fill-rule="evenodd" d="M503.5 314.5A64.5 30.5 0 1 0 632.5 314.5A64.5 30.5 0 1 0 503.5 314.5ZM510 314.5A58 27 0 1 0 626 314.5A58 27 0 1 0 510 314.5Z" fill="#737884"/><path fill-rule="evenodd" d="M510 314.5A58 27 0 1 0 626 314.5A58 27 0 1 0 510 314.5ZM512 314.5A56 25.9 0 1 0 624 314.5A56 25.9 0 1 0 512 314.5Z" fill="#3e4250"/><path fill-rule="evenodd" d="M512 314.5A56 25.9 0 1 0 624 314.5A56 25.9 0 1 0 512 314.5ZM517.5 314.5A50.5 23.2 0 1 0 618.5 314.5A50.5 23.2 0 1 0 517.5 314.5Z" fill="#b4b0a8"/><path fill-rule="evenodd" d="M517.5 314.5A50.5 23.2 0 1 0 618.5 314.5A50.5 23.2 0 1 0 517.5 314.5ZM523.6 314.5A44.4 20.2 0 1 0 612.4 314.5A44.4 20.2 0 1 0 523.6 314.5Z" fill="#d8d2c4"/>
 <ellipse cx="568" cy="314.5" rx="44.4" ry="20.2" fill="#06060a"/>
 <ellipse cx="564.5" cy="311" rx="27.6" ry="23.6" fill="#06060a" clip-path="url(#shclip)"/>
 <ellipse cx="568.5" cy="310.5" rx="27.6" ry="23.6" fill="url(#globe)"/>
 <ellipse cx="568.5" cy="310.5" rx="27.6" ry="23.6" fill="url(#gl2)"/>
 <g clip-path="url(#front)"><path fill-rule="evenodd" d="M503.5 314.5A64.5 30.5 0 1 0 632.5 314.5A64.5 30.5 0 1 0 503.5 314.5ZM510 314.5A58 27 0 1 0 626 314.5A58 27 0 1 0 510 314.5Z" fill="#737884"/><path fill-rule="evenodd" d="M510 314.5A58 27 0 1 0 626 314.5A58 27 0 1 0 510 314.5ZM512 314.5A56 25.9 0 1 0 624 314.5A56 25.9 0 1 0 512 314.5Z" fill="#3e4250"/><path fill-rule="evenodd" d="M512 314.5A56 25.9 0 1 0 624 314.5A56 25.9 0 1 0 512 314.5ZM517.5 314.5A50.5 23.2 0 1 0 618.5 314.5A50.5 23.2 0 1 0 517.5 314.5Z" fill="#b4b0a8"/><path fill-rule="evenodd" d="M517.5 314.5A50.5 23.2 0 1 0 618.5 314.5A50.5 23.2 0 1 0 517.5 314.5ZM523.6 314.5A44.4 20.2 0 1 0 612.4 314.5A44.4 20.2 0 1 0 523.6 314.5Z" fill="#d8d2c4"/></g>
</g>
</svg>
<div class="a" style="left:159.5px;top:590.2px;width:840.5px;height:1.6px;background:#434343"></div>
<div class="a" style="left:1px;top:591.8px;width:999px;height:1.2px;background:#7c7c7c"></div>
<div class="a" style="left:1px;top:593px;width:999px;height:0.9px;background:#363640"></div>
<div class="a" style="left:1px;top:593.9px;width:999px;height:2.3px;background:#404456"></div>
<div class="a" style="left:1px;top:596.2px;width:999px;height:6.8px;background:#2e2e2c"></div>
<div class="t" style="left:3px;top:595px;font-size:6.6px;letter-spacing:-0.5px;color:#eeeeee">GPCMOS02000KPA</div>
<div class="a" style="left:319.2px;top:593.6px;width:1.1px;height:9.4px;background:#6a6a6a"></div>
<div class="a" style="left:532.5px;top:593.5px;width:1px;height:9.5px;background:#555"></div>
<div class="t" style="left:535px;top:595px;font-size:6.3px;letter-spacing:-0.1px;color:#eeeeee">Bildrate: 3.9; Einzelbild: 3669</div>
<div class="a" style="left:809.5px;top:593.5px;width:1px;height:9.5px;background:#555"></div>
<div class="t" style="left:812px;top:595px;font-size:6.3px;letter-spacing:-0.3px;color:#eeeeee">1920 × 1080</div>
<div class="a" style="left:916.8px;top:593.5px;width:0.8px;height:9.5px;background:#222"></div>
<div class="a" style="left:917.6px;top:593.5px;width:1.2px;height:9.5px;background:#5a5a5a"></div>
<div class="a" style="left:921.6px;top:594.5px;width:3.6px;height:8.5px;background:#1f7c98;opacity:0.8"></div>
</body></html>
